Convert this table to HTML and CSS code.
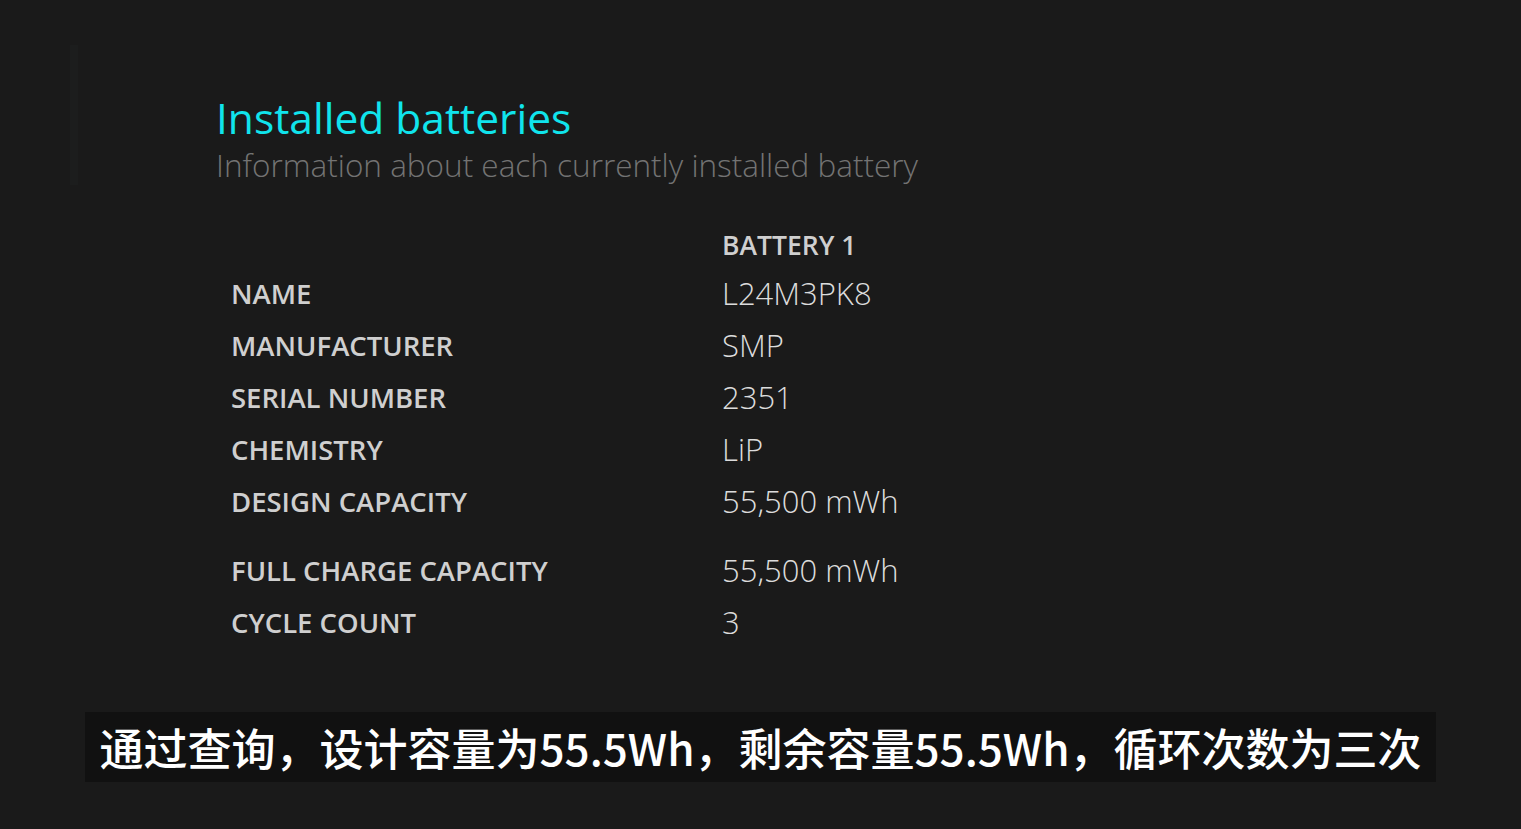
FILE: index.html
```html
<!DOCTYPE html>
<html lang="zh">
<head>
<meta charset="utf-8">
<link rel="stylesheet" href="styles.css">
<title>Battery report</title>
</head>
<body>
<div class="screen">
  <div class="edge"></div>
  <section class="report">
    <h1 class="title">Installed batteries</h1>
    <p class="subtitle">Information about each currently installed battery</p>
    <div class="table">
      <div class="row head"><span class="label"></span><span class="col-head">BATTERY 1</span></div>
      <div class="row"><span class="label">NAME</span><span class="value">L24M3PK8</span></div>
      <div class="row"><span class="label">MANUFACTURER</span><span class="value">SMP</span></div>
      <div class="row"><span class="label">SERIAL NUMBER</span><span class="value">2351</span></div>
      <div class="row"><span class="label">CHEMISTRY</span><span class="value">LiP</span></div>
      <div class="row"><span class="label">DESIGN CAPACITY</span><span class="value">55,500 mWh</span></div>
      <div class="row gap"><span class="label">FULL CHARGE CAPACITY</span><span class="value">55,500 mWh</span></div>
      <div class="row"><span class="label">CYCLE COUNT</span><span class="value">3</span></div>
    </div>
  </section>
  <div class="caption-wrap">
    <div class="caption">通过查询，设计容量为55.5Wh，剩余容量55.5Wh，循环次数为三次</div>
  </div>
</div>
</body>
</html>
```

FILE: styles.css
```css
* { box-sizing: border-box; }
html, body {
  margin: 0;
  padding: 0;
  background: #1a1a1a;
}
.screen {
  position: relative;
  width: 1521px;
  height: 829px;
  overflow: hidden;
  background: #1a1a1a;
  font-family: "Open Sans", "Noto Sans", sans-serif;
}
.edge {
  position: absolute;
  left: 70px;
  top: 45px;
  width: 8px;
  height: 140px;
  background: #1c1d1d;
}
.report {
  padding: 93px 0 0 216px;
}
.title {
  margin: 0;
  font-weight: 400;
  font-size: 42.5px;
  line-height: 50px;
  color: #10e4ec;
}
.subtitle {
  margin: 0;
  font-weight: 300;
  font-size: 31.5px;
  line-height: 44px;
  color: #737373;
}
.table {
  margin-top: 36px;
  padding-left: 15px;
}
.row {
  display: grid;
  grid-template-columns: 491px 1fr;
  height: 52px;
  align-items: center;
}
.row.head { height: 44px; }
.row.gap { margin-top: 17px; }
.label {
  font-weight: 600;
  font-size: 27.5px;
  color: #cfcfcf;
}
.col-head {
  font-weight: 600;
  font-size: 26.5px;
  color: #cfcfcf;
}
.value {
  font-weight: 300;
  font-size: 31px;
  color: #dcdcdc;
}
.caption-wrap {
  position: absolute;
  left: 0;
  right: 0;
  top: 712px;
  display: flex;
  justify-content: center;
}
.caption {
  background: #111111;
  height: 70px;
  padding: 0 14px;
  display: flex;
  align-items: center;
  font-family: "Noto Sans CJK SC", "Noto Sans", sans-serif;
  font-weight: 500;
  font-size: 44px;
  color: #ffffff;
  white-space: nowrap;
}
```
